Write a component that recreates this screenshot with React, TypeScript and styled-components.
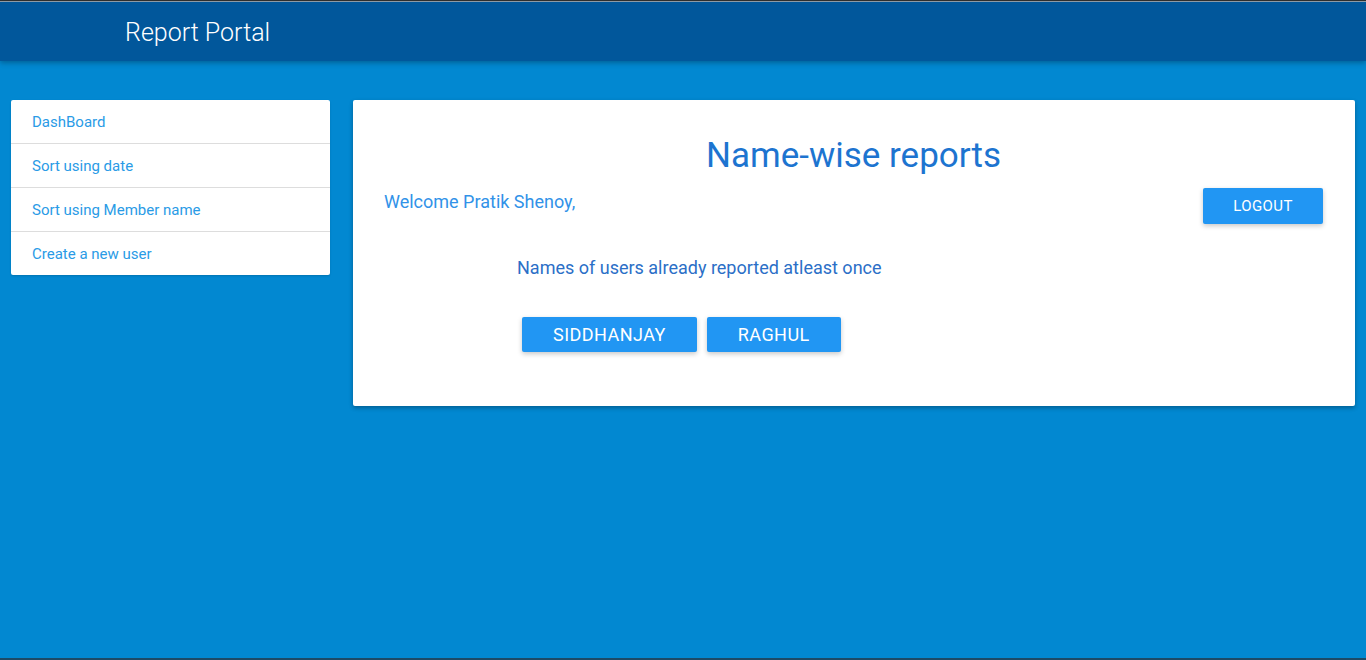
import React from "react";
import styled, { createGlobalStyle } from "styled-components";

const Global = createGlobalStyle`
  html, body { margin: 0; padding: 0; }
  body { font-family: Roboto, "Liberation Sans", sans-serif; background: #0288d1; }
`;

const Page = styled.div`
  min-height: 660px;
  height: 660px;
  box-sizing: border-box;
  background: #0288d1;
  border-top: 1px solid #2e2e2e;
  border-bottom: 2px solid #1d4a66;
  display: flex;
  flex-direction: column;
  overflow: hidden;
`;

const Header = styled.header`
  height: 60px;
  box-sizing: border-box;
  border-top: 1px solid #8d9aa6;
  background: #01579b;
  box-shadow: 0 2px 5px rgba(0, 0, 0, 0.28);
  display: flex;
  align-items: center;
  padding-left: 125px;
  padding-top: 1px;
  position: relative;
  z-index: 1;
`;

const Brand = styled.div`
  color: #ffffff;
  font-size: 25px;
  font-weight: 300;
`;

const Main = styled.main`
  display: flex;
  align-items: flex-start;
  gap: 23px;
  padding: 39px 11px 0 11px;
`;

const Sidebar = styled.nav`
  width: 319px;
  flex: none;
  background: #fff;
  border-radius: 2px;
  box-shadow: 0 1px 2px rgba(0, 0, 0, 0.15);
  display: flex;
  flex-direction: column;
`;

const NavItem = styled.a`
  display: block;
  padding: 13px 21px 11px;
  line-height: 19px;
  font-size: 15px;
  color: #2a9be6;
  text-decoration: none;
  & + & { border-top: 1px solid #dddddd; }
`;

const Card = styled.section`
  flex: 1;
  height: 306px;
  box-sizing: border-box;
  background: #fff;
  border-radius: 2px;
  box-shadow: 0 2px 4px rgba(0, 0, 0, 0.3);
  padding: 36px 32px 0 31px;
`;

const Title = styled.h1`
  margin: 0;
  text-align: center;
  font-size: 35px;
  font-weight: 400;
  line-height: 40px;
  color: #1d74d0;
`;

const TopRow = styled.div`
  display: flex;
  justify-content: space-between;
  align-items: flex-start;
  margin-top: 12px;
`;

const Welcome = styled.div`
  font-size: 18px;
  line-height: 20px;
  margin-top: 4px;
  color: #3192e8;
`;

const Button = styled.button<{ $big?: boolean }>`
  background: #2196f3;
  color: #fff;
  border: none;
  border-radius: 2px;
  font-family: Roboto, "Liberation Sans", sans-serif;
  font-size: ${(p) => (p.$big ? "18px" : "15px")};
  letter-spacing: ${(p) => (p.$big ? "0.45px" : "0.4px")};
  text-transform: uppercase;
  height: ${(p) => (p.$big ? "35px" : "36px")};
  padding: 0 ${(p) => (p.$big ? "31px" : "30px")};
  min-width: 120px;
  box-shadow: 0 2px 5px rgba(0, 0, 0, 0.22);
  cursor: pointer;
`;

const Users = styled.div`
  padding-left: 133px;
  margin-top: 34px;
`;

const Subtitle = styled.div`
  font-size: 18px;
  line-height: 20px;
  color: #2b6fc7;
`;

const ButtonRow = styled.div`
  display: flex;
  gap: 10px;
  margin-top: 39px;
  padding-left: 5px;
`;

export default function App() {
  return (
    <Page>
      <Global />
      <Header>
        <Brand>Report Portal</Brand>
      </Header>
      <Main>
        <Sidebar>
          <NavItem href="#">DashBoard</NavItem>
          <NavItem href="#">Sort using date</NavItem>
          <NavItem href="#">Sort using Member name</NavItem>
          <NavItem href="#">Create a new user</NavItem>
        </Sidebar>
        <Card>
          <Title>Name-wise reports</Title>
          <TopRow>
            <Welcome>Welcome Pratik Shenoy,</Welcome>
            <Button>Logout</Button>
          </TopRow>
          <Users>
            <Subtitle>Names of users already reported atleast once</Subtitle>
            <ButtonRow>
              <Button $big>Siddhanjay</Button>
              <Button $big>Raghul</Button>
            </ButtonRow>
          </Users>
        </Card>
      </Main>
    </Page>
  );
}
